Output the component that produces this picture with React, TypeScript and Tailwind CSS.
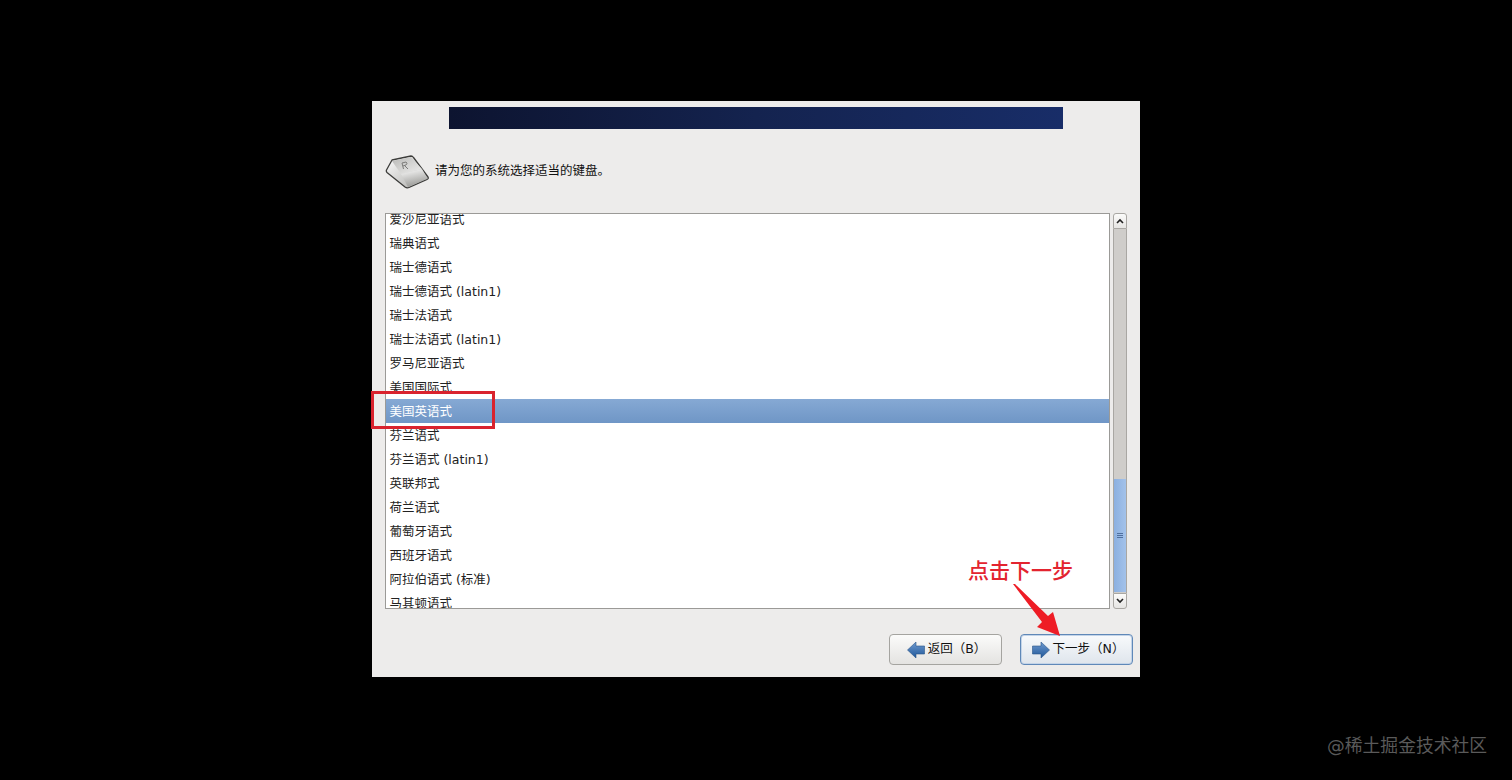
const LAYOUTS = [
  '爱沙尼亚语式',
  '瑞典语式',
  '瑞士德语式',
  '瑞士德语式 (latin1)',
  '瑞士法语式',
  '瑞士法语式 (latin1)',
  '罗马尼亚语式',
  '美国国际式',
  '美国英语式',
  '芬兰语式',
  '芬兰语式 (latin1)',
  '英联邦式',
  '荷兰语式',
  '葡萄牙语式',
  '西班牙语式',
  '阿拉伯语式 (标准)',
  '马其顿语式',
];

const SELECTED = '美国英语式';

function KeyIcon() {
  return (
    <svg width="45" height="34" viewBox="0 0 45 34" aria-hidden="true">
      <defs>
        <linearGradient id="keyFront" x1="0" y1="0" x2="0.3" y2="1">
          <stop offset="0" stopColor="#fdfdfd" />
          <stop offset="1" stopColor="#9c9c99" />
        </linearGradient>
        <linearGradient id="keySide" x1="0" y1="0" x2="1" y2="1">
          <stop offset="0" stopColor="#ffffff" />
          <stop offset="1" stopColor="#a8a8a5" />
        </linearGradient>
        <linearGradient id="keyTop" x1="0" y1="0" x2="1" y2="1">
          <stop offset="0" stopColor="#b9b9b7" />
          <stop offset="1" stopColor="#eeeeed" />
        </linearGradient>
      </defs>
      <path d="M1.5 15 L7 5 L26 1 Q27.5 1 28.5 2.5 L43 22 Q44 23.5 42 24.5 L24 32.5 Q22 33.5 20 32 L2 17.5 Q1 16.5 1.5 15 Z" fill="url(#keySide)" stroke="#3c3c3a" strokeWidth="1.3" strokeLinejoin="round" />
      <path d="M7 6 L26 2 L37 14 L16 19 Z" fill="url(#keyTop)" />
      <path d="M16 19 L37 14 L42.5 23.5 L23 32 Z" fill="url(#keyFront)" />
      <path d="M17 8 L21 7 Q23 8 21 10 L18 11 M19.5 10.5 L23 14 M17 8 L18.5 14" stroke="#7c7c7a" strokeWidth="1" fill="none" />
    </svg>
  );
}

function NavArrow({ dir }: { dir: 'left' | 'right' }) {
  return (
    <svg width="18" height="18" viewBox="0 0 18 18" aria-hidden="true">
      <defs>
        <linearGradient id={`nav-${dir}`} x1="0" y1="0" x2="0" y2="1">
          <stop offset="0" stopColor="#6f9ad0" />
          <stop offset="1" stopColor="#1f5799" />
        </linearGradient>
      </defs>
      {dir === 'left' ? (
        <path d="M0.5 9 L9 1 V5 H17.5 V13 H9 V17 Z" fill={`url(#nav-${dir})`} stroke="#2a5688" strokeWidth="0.6" />
      ) : (
        <path d="M17.5 9 L9 1 V5 H0.5 V13 H9 V17 Z" fill={`url(#nav-${dir})`} stroke="#2a5688" strokeWidth="0.6" />
      )}
    </svg>
  );
}

function ScrollButton({ up }: { up?: boolean }) {
  return (
    <div className={`flex h-[16px] items-center justify-center border border-[#a9a7a3] bg-gradient-to-b from-[#fbfbfa] to-[#e6e5e3] ${up ? 'rounded-t-[3px]' : 'rounded-b-[3px]'}`}>
      <svg width="8" height="6" viewBox="0 0 8 6" aria-hidden="true">
        <path d={up ? 'M1 5 L4 2 L7 5' : 'M1 1 L4 4 L7 1'} stroke="#222" strokeWidth="1.6" fill="none" />
      </svg>
    </div>
  );
}

export default function App() {
  return (
    <div
      className="relative h-[780px] overflow-hidden bg-black pt-[101px] pl-[372px]"
      style={{ fontFamily: '"DejaVu Sans", "Noto Sans CJK SC", sans-serif' }}
    >
      {/* Installer window */}
      <div className="flex h-[576px] w-[768px] flex-col bg-[#edeceb] px-[13px] pt-[6px]">
        {/* Banner */}
        <div className="mx-[64px] h-[22px] w-[614px] shrink-0 bg-gradient-to-r from-[#0d1430] via-[#14234f] to-[#182d68]" />

        {/* Prompt */}
        <div className="mt-[26px] flex h-[33px] items-center">
          <KeyIcon />
          <p className="ml-[5px] text-[12.5px] leading-none text-[#111111]">请为您的系统选择适当的键盘。</p>
        </div>

        {/* List + scrollbar */}
        <div className="mt-[25px] flex h-[396px] w-[742px] shrink-0">
          <div className="h-full w-[725px] overflow-hidden border border-[#9b9a97] bg-white">
            <ul className="-mt-[7px]">
              {LAYOUTS.map((name) => (
                <li
                  key={name}
                  className={`flex h-[24px] items-center pt-[2px] pl-[3.5px] text-[12.5px] ${
                    name === SELECTED ? 'bg-gradient-to-b from-[#86a9d4] to-[#6f96c6] text-white' : 'text-[#222222]'
                  }`}
                >
                  {name}
                </li>
              ))}
            </ul>
          </div>
          <div className="ml-[3px] flex h-full w-[14px] flex-col">
            <ScrollButton up />
            <div className="flex flex-1 flex-col justify-end border-x border-[#a9a7a3] bg-[#cfcdca]">
              <div className="mb-[1px] flex h-[113px] flex-col items-center justify-center gap-[1px] bg-gradient-to-r from-[#8cb0e0] to-[#a3c2ea]">
                <span className="h-px w-[6px] bg-[#4f6f9e]" />
                <span className="h-px w-[6px] bg-[#4f6f9e]" />
                <span className="h-px w-[6px] bg-[#4f6f9e]" />
              </div>
            </div>
            <ScrollButton />
          </div>
        </div>

        {/* Buttons */}
        <div className="mt-[25px] flex w-[748px] justify-end gap-[18px]">
          <button
            type="button"
            className="flex h-[31px] w-[113px] items-center justify-center gap-[3px] rounded-[4px] border border-[#a5a4a0] bg-gradient-to-b from-[#fbfbfa] to-[#e4e3e1] pl-[2px] text-[12.5px] text-[#111111]"
          >
            <NavArrow dir="left" />
            返回（B）
          </button>
          <button
            type="button"
            className="flex h-[31px] w-[113px] items-center justify-center gap-[3px] rounded-[4px] border border-[#5f88b8] bg-gradient-to-b from-[#f8fafc] to-[#dfe5ec] pl-[3px] text-[12.5px] text-[#111111] shadow-[inset_0_0_0_1px_#c3d4e8]"
          >
            <NavArrow dir="right" />
            下一步（N）
          </button>
        </div>
      </div>

      {/* Annotations drawn over the screenshot */}
      <div className="absolute left-[371px] top-[391px] h-[38px] w-[124px] border-[3px] border-[#d9232e]" />
      <span className="absolute left-[968px] top-[556px] text-[21px] font-medium leading-[30px] text-[#e3242f]">点击下一步</span>
      <svg className="absolute left-[1010px] top-[582px]" width="56" height="56" viewBox="0 0 56 56" aria-hidden="true">
        <path d="M3 2 L5 2 L38 34 L43 30 L50 54 L27 45 L32 40 Z" fill="#ee1c25" />
      </svg>

      <span className="absolute left-[1327px] top-[733px] text-[17.8px] leading-[26px] text-[#5a5a5a]">@稀土掘金技术社区</span>
    </div>
  );
}
